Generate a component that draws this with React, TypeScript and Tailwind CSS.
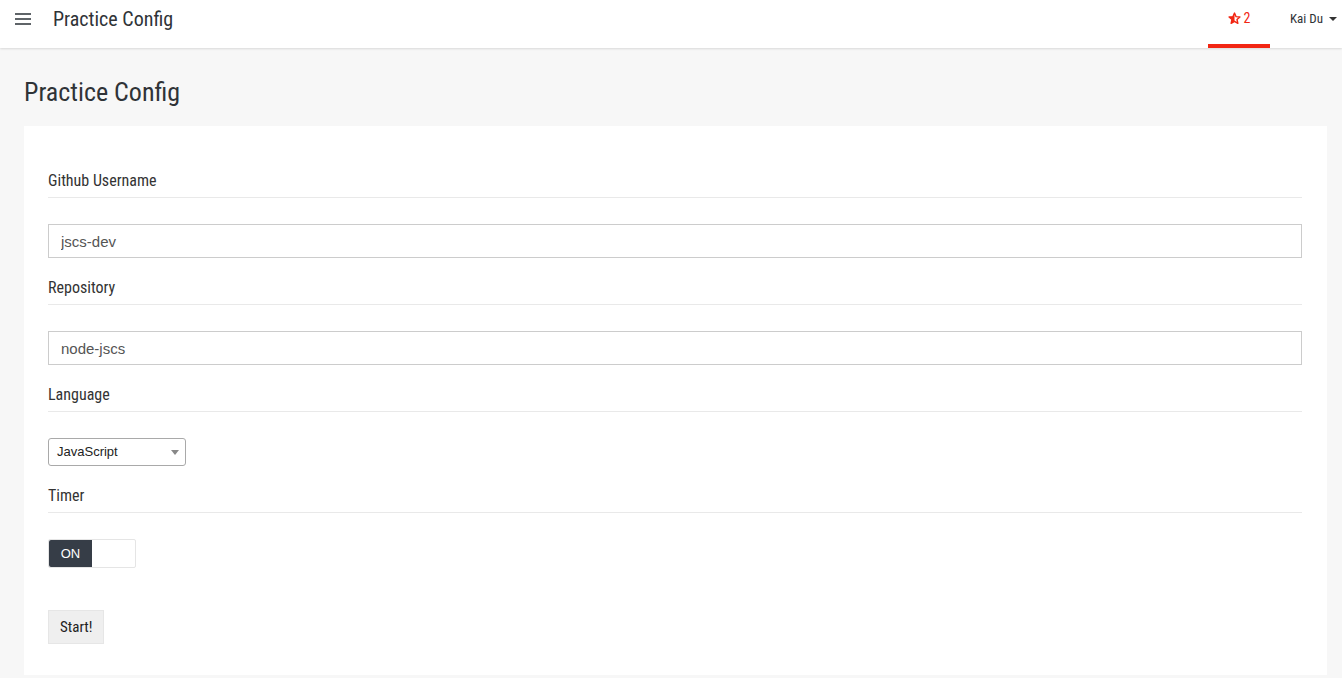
import { useState } from "react";

const condensed = "font-['Roboto_Condensed','Liberation_Sans_Narrow',Roboto,sans-serif] font-stretch-condensed";

const Field = ({ label, children }: { label: string; children: React.ReactNode }) => (
  <div>
    <div className={`pt-[18px] pb-1 border-b border-[#e9e9e9] h-[47px] text-[16px] leading-6 text-[#333] ${condensed}`}>
      {label}
    </div>
    <div className="mt-[26px]">{children}</div>
  </div>
);

const StarHalf = () => (
  <svg width="13" height="13" viewBox="0 0 24 24" className="text-[#f22613]">
    <path d="M12 2l2.9 6.6 7.1.6-5.4 4.7 1.6 7-6.2-3.7-6.2 3.7 1.6-7L2 9.2l7.1-.6z" fill="none" stroke="currentColor" strokeWidth="2.6" strokeLinejoin="round" />
    <path d="M12 2L9.1 8.6 2 9.2l5.4 4.7-1.6 7 6.2-3.7z" fill="currentColor" />
  </svg>
);

export default function App() {
  const [user, setUser] = useState("jscs-dev");
  const [repo, setRepo] = useState("node-jscs");
  const [timer, setTimer] = useState(true);

  return (
    <div className="min-h-[678px] bg-[#f7f7f7] font-['Liberation_Sans',Arial,sans-serif]">
      {/* top bar */}
      <header className="h-12 bg-white flex items-stretch shadow-[0_1px_2px_rgba(0,0,0,0.12)] relative z-10">
        <div className="flex items-center pb-[11px]">
          <button className="ml-[15px] flex flex-col gap-[3px] w-4">
            <span className="h-[2px] bg-[#5f6468] block" />
            <span className="h-[2px] bg-[#5f6468] block" />
            <span className="h-[2px] bg-[#5f6468] block" />
          </button>
          <h1 className={`ml-[22px] text-[20px] text-[#2f3337] ${condensed}`}>Practice Config</h1>
        </div>
        <div className="ml-auto flex items-stretch">
          <div className="w-[62px] flex items-center justify-center gap-[3px] border-b-4 border-[#f22613] pb-[7px] text-[#f22613] text-[14px]">
            <StarHalf />
            <span className={condensed}>2</span>
          </div>
          <div className={`pl-[20px] pr-[5px] pb-[11px] flex items-center gap-[6px] text-[13px] text-[#2f3337] ${condensed}`}>
            Kai Du
            <span className="w-0 h-0 border-l-[4px] border-r-[4px] border-t-[4px] border-l-transparent border-r-transparent border-t-[#333]" />
          </div>
        </div>
      </header>

      <main className="pl-6 pr-[15px]">
        <h2 className={`pt-[31px] pb-[21px] text-[26px] leading-[26px] text-[#2f3337] ${condensed}`}>Practice Config</h2>
        <section className="bg-white pl-6 pr-[25px] pt-[25px] pb-[31px]">
          <Field label="Github Username">
            <input
              value={user}
              onChange={(e) => setUser(e.target.value)}
              className="w-full h-[34px] border border-[#cccccc] px-3 text-[15px] text-[#555] outline-none"
            />
          </Field>
          <Field label="Repository">
            <input
              value={repo}
              onChange={(e) => setRepo(e.target.value)}
              className="w-full h-[34px] border border-[#cccccc] px-3 text-[15px] text-[#555] outline-none"
            />
          </Field>
          <Field label="Language">
            <div className="w-[138px] h-[28px] border border-[#a9a9a9] rounded-[3px] flex items-center justify-between pl-2 pr-[6px] text-[13px] text-[#222]">
              JavaScript
              <span className="w-0 h-0 border-l-[4px] border-r-[4px] border-t-[5px] border-l-transparent border-r-transparent border-t-[#888]" />
            </div>
          </Field>
          <Field label="Timer">
            <button
              onClick={() => setTimer(!timer)}
              className="w-[88px] h-[29px] border border-[#e5e5e5] rounded-[2px] flex bg-white"
            >
              <span className="w-[43px] h-full bg-[#363d47] text-white text-[13px] flex items-center justify-center rounded-l-[2px]">
                {timer ? "ON" : ""}
              </span>
            </button>
          </Field>
          <button className={`mt-[42px] h-[34px] px-[11px] bg-[#efefef] border border-[#e6e6e6] text-[15px] text-[#222] ${condensed}`}>
            Start!
          </button>
        </section>
      </main>
    </div>
  );
}
